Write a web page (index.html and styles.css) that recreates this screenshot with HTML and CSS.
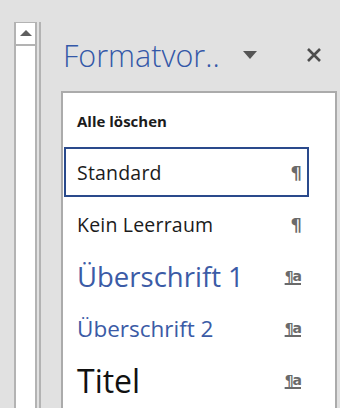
FILE: index.html
```html
<!DOCTYPE html>
<html lang="de">
<head>
    <meta charset="UTF-8">
    <title>Formatvorlagen</title>
    <link rel="stylesheet" href="styles.css">
</head>
<body>
    <div class="window">
        <div class="scrollbar">
            <div class="scroll-up"><span class="arrow-up"></span></div>
            <div class="track"></div>
        </div>
        <div class="divider"></div>

        <div class="pane">
            <div class="pane-header">
                <span class="pane-title">Formatvor..</span>
                <span class="pane-menu"></span>
                <svg class="pane-close" width="16" height="16" viewBox="0 0 16 16">
                    <path d="M2 2 L14 14 M14 2 L2 14" stroke="#4d4d4d" stroke-width="2.6"/>
                </svg>
            </div>

            <div class="style-list">
                <div class="style-row clear-all">Alle löschen</div>
                <div class="style-row selected">
                    <span class="name normal">Standard</span>
                    <span class="mark">¶</span>
                </div>
                <div class="style-row">
                    <span class="name normal">Kein Leerraum</span>
                    <span class="mark">¶</span>
                </div>
                <div class="style-row">
                    <span class="name heading1">Überschrift 1</span>
                    <span class="mark linked">¶a</span>
                </div>
                <div class="style-row">
                    <span class="name heading2">Überschrift 2</span>
                    <span class="mark linked">¶a</span>
                </div>
                <div class="style-row">
                    <span class="name title">Titel</span>
                    <span class="mark linked">¶a</span>
                </div>
            </div>
        </div>
    </div>
</body>
</html>
```

FILE: styles.css
```css
* {
    margin: 0;
    padding: 0;
    box-sizing: border-box;
}
body {
    background-color: #e1e1e1;
    font-family: "Open Sans", sans-serif;
    overflow: hidden;
}
.window {
    width: 340px;
    height: 408px;
    display: flex;
    padding-top: 22px;
}

/* left ruler scrollbar */
.scrollbar {
    margin-left: 14px;
    width: 23px;
    background: #fff;
    border-left: 2px solid #b3b3b3;
    border-right: 2px solid #b3b3b3;
    border-top: 1px solid #b3b3b3;
    display: flex;
    flex-direction: column;
}
.scroll-up {
    height: 23px;
    border-bottom: 2px solid #b3b3b3;
    display: flex;
    justify-content: center;
    padding-top: 7px;
}
.arrow-up {
    width: 0;
    height: 0;
    border-left: 6px solid transparent;
    border-right: 6px solid transparent;
    border-bottom: 6px solid #5f5f5f;
}
.divider {
    margin-left: 2px;
    width: 2px;
    background: #b3b3b3;
}

/* styles pane */
.pane {
    flex: 1;
    padding-left: 20px;
    padding-right: 3px;
    display: flex;
    flex-direction: column;
}
.pane-header {
    height: 69px;
    display: flex;
    align-items: flex-start;
    padding-right: 15px;
}
.pane-title {
    font-size: 30.5px;
    font-weight: 300;
    color: #3458a8;
    line-height: 30px;
    padding-top: 18px;
    padding-left: 2px;
}
.pane-menu {
    margin-top: 29px;
    margin-left: auto;
    width: 0;
    height: 0;
    border-left: 7px solid transparent;
    border-right: 7px solid transparent;
    border-top: 8px solid #555;
}
.pane-close {
    margin-top: 25px;
    margin-left: 49px;
}

.style-list {
    flex: 1;
    background: #fff;
    border: 2px solid #ababab;
    border-bottom: none;
    padding: 2px 26px 0 1px;
    display: flex;
    flex-direction: column;
    gap: 2px;
}
.style-row {
    height: 50px;
    border: 2px solid transparent;
    padding: 0 5px 0 11px;
    display: flex;
    align-items: center;
    justify-content: space-between;
    color: #1b1b1b;
}
.style-row.selected {
    border-color: #2a4a8c;
}
.clear-all {
    font-size: 15px;
    font-weight: bold;
    padding-top: 2px;
}
.name.normal {
    font-size: 19.5px;
    letter-spacing: 0.2px;
}
.name.heading1 {
    font-size: 27.5px;
    color: #3b5ba6;
}
.name.heading2 {
    font-size: 22.5px;
    color: #3b5ba6;
}
.name.title {
    font-size: 32px;
    color: #111;
}
.mark {
    font-family: "DejaVu Sans", sans-serif;
    font-weight: bold;
    font-size: 18px;
    color: #6a6a6a;
    width: 22px;
    text-align: right;
}
.mark.linked {
    font-size: 14px;
    text-decoration: underline;
    text-decoration-thickness: 2px;
    text-underline-offset: 2px;
    letter-spacing: -1px;
    padding-right: 1px;
}
```
